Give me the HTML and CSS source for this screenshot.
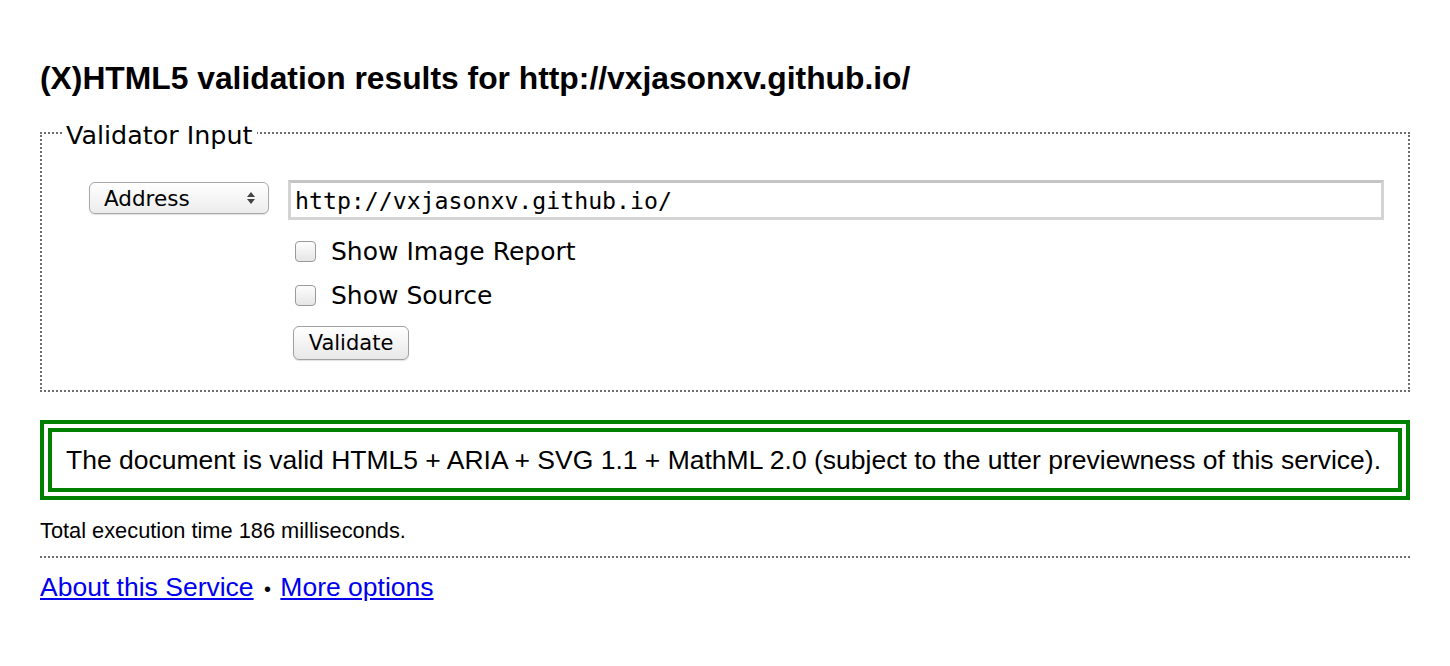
FILE: index.html
```html
<!DOCTYPE html>
<html>
<head>
<meta charset="utf-8">
<title>Validator</title>
<link rel="stylesheet" href="styles.css">
</head>
<body>
<div class="page">
  <h1 class="title">(X)HTML5 validation results for http://vxjasonxv.github.io/</h1>
  <fieldset class="input-box">
    <legend class="legend">Validator Input</legend>
    <div class="row">
      <div class="select">
        <span>Address</span>
        <svg class="arrows" width="10" height="14" viewBox="0 0 10 14"><path d="M5 1 L9 6 L1 6 Z M5 13 L9 8 L1 8 Z" fill="#444"/></svg>
      </div>
      <div class="col">
        <div class="url">http://vxjasonxv.github.io/</div>
        <div class="check first"><span class="box"></span><span>Show Image Report</span></div>
        <div class="check"><span class="box"></span><span>Show Source</span></div>
        <div class="btn">Validate</div>
      </div>
    </div>
  </fieldset>
  <p class="result">The document is valid HTML5 + ARIA + SVG 1.1 + MathML 2.0 (subject to the utter previewness of this service).</p>
  <p class="time">Total execution time 186 milliseconds.</p>
  <hr class="rule">
  <p class="links"><a href="#">About this Service</a> <span class="dot">•</span> <a href="#">More options</a></p>
</div>
</body>
</html>
```
FILE: styles.css
```css
html, body { margin: 0; padding: 0; background: #fff; }
body { font-family: "Liberation Sans", Arial, sans-serif; color: #000; }
.page { padding: 0 40px; }
.title { margin: 0; padding-top: 59px; font-size: 31.8px; font-weight: bold; line-height: 38px; }
.input-box {
  margin: 18px 0 0 0;
  border: 2px dotted #6e6e6e;
  padding: 30px 24px 30px 47px;
  font-family: "DejaVu Sans", sans-serif;
}
.legend { font-size: 25.4px; padding: 5px 4px 0 4px; margin-left: -27px; line-height: 30px; }
.row { display: flex; gap: 19px; align-items: flex-start; }
.select {
  margin-top: 2px;
  width: 180px; height: 32px; box-sizing: border-box;
  border: 1px solid #a8a8a8; border-radius: 6px;
  background: linear-gradient(#ffffff, #ececec);
  box-shadow: 0 1px 1px rgba(0,0,0,0.12);
  display: flex; align-items: center; justify-content: space-between;
  padding: 0 12px 0 14px;
  font-size: 21.5px;
}
.arrows { display: block; }
.col { flex: 1; display: flex; flex-direction: column; align-items: flex-start; }
.url {
  align-self: stretch; height: 40px; box-sizing: border-box;
  border: 3px solid #d4d4d4; border-top-color: #c4c4c4;
  font-family: "DejaVu Sans Mono", monospace; font-size: 23.2px;
  display: flex; align-items: center; padding-left: 4px;
}
.check { display: flex; align-items: center; height: 44px; font-size: 25px; margin-left: 7px; }
.check.first { margin-top: 9px; }
.box {
  width: 21px; height: 21px; box-sizing: border-box;
  border: 1px solid #9a9a9a; border-radius: 4px;
  background: linear-gradient(#fdfdfd, #e6e6e6);
  margin-right: 15px;
}
.btn {
  margin: 9px 0 0 5px;
  width: 116px; height: 34px; box-sizing: border-box;
  border: 1px solid #a0a0a0; border-radius: 6px;
  background: linear-gradient(#ffffff, #e8e8e8);
  box-shadow: 0 1px 1px rgba(0,0,0,0.12);
  display: flex; align-items: center; justify-content: center;
  font-size: 21px;
}
.result {
  margin: 28px 0 0 0;
  border: 12px double #008000;
  padding: 13px 14px;
  font-size: 26.5px; line-height: 30px;
}
.time { margin: 18px 0 0 0; font-size: 21.8px; line-height: 26px; }
.rule { margin: 12px 0 0 0; border: 0; border-top: 2px dotted #6e6e6e; height: 0; }
.links { margin: 14px 0 0 0; font-size: 26.5px; line-height: 30px; }
.links a { color: #0000ee; text-decoration: underline; }
.dot { font-size: 20px; margin: 0 2px 0 3px; }
```
